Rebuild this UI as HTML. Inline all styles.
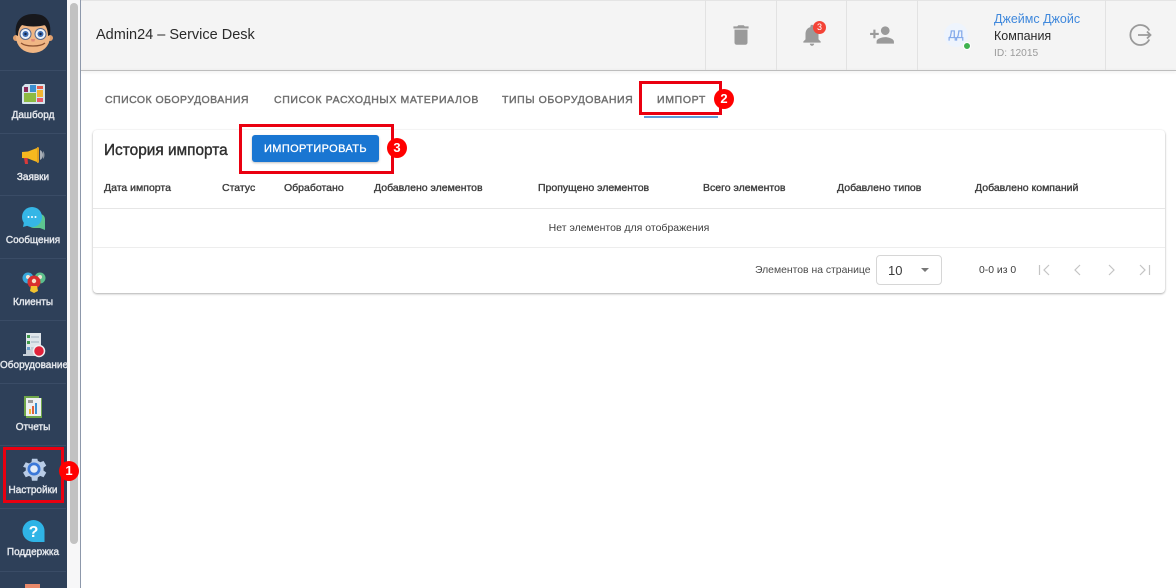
<!DOCTYPE html>
<html lang="ru"><head><meta charset="utf-8"><title>Admin24</title>
<style>
html,body{margin:0;padding:0;width:1176px;height:588px;overflow:hidden;background:#fff;font-family:"Liberation Sans",Arial,sans-serif}
.a{position:absolute;white-space:nowrap}
#side{position:absolute;left:0;top:0;width:67px;height:588px;background:#2e4059}
.div{position:absolute;left:0;width:66px;height:1px;background:#3a4c66}
.nl{position:absolute;left:0;width:66px;text-align:center;color:#e4e7ec;font-size:10px;-webkit-text-stroke:.4px #e4e7ec;white-space:nowrap;line-height:12px}
.tab{position:absolute;top:93px;font-size:10.5px;color:#6f6f6f;-webkit-text-stroke:.4px #6f6f6f;line-height:14px;white-space:nowrap}
.th{position:absolute;top:182px;font-size:10.5px;color:#3d3d3d;-webkit-text-stroke:.35px #3d3d3d;line-height:13px;white-space:nowrap}
.badge{position:absolute;width:20px;height:20px;border-radius:50%;background:#f00;color:#fff;font-size:13px;font-weight:bold;text-align:center;line-height:20px}
.red{position:absolute;border:3px solid #ea0010;box-sizing:border-box}
.vd{position:absolute;top:0;width:1px;height:70px;background:#e2e2e2}
svg{position:absolute;overflow:visible}
</style></head><body>
<div id="side"></div>
<div class="a" style="left:67px;top:0;width:13px;height:588px;background:#f7f7f8"></div>
<div class="a" style="left:70px;top:3px;width:8px;height:541px;background:#c2c2c2;border-radius:4px"></div>
<div class="a" style="left:80px;top:0;width:1px;height:588px;background:#8d98ab"></div>

<div class="div" style="top:70px"></div><div class="div" style="top:133px"></div><div class="div" style="top:195px"></div><div class="div" style="top:258px"></div><div class="div" style="top:320px"></div><div class="div" style="top:383px"></div><div class="div" style="top:445px"></div><div class="div" style="top:508px"></div><div class="div" style="top:571px"></div>

<!-- avatar -->
<svg style="left:13px;top:13px" width="40" height="40" viewBox="0 0 40 40">
<circle cx="3" cy="25" r="3" fill="#e0a06e"/><circle cx="37" cy="25" r="3" fill="#e0a06e"/>
<ellipse cx="20" cy="24" rx="17" ry="16" fill="#f0b684"/>
<path d="M3 22C1 9 8 1 20 1c6 0 10 1 13 4 4 4 5 10 4 17l-2 1c0-4-1-8-3-11-6 2-17 2-23 0-3 3-4 7-4 11z" fill="#17181c"/>
<circle cx="12.500" cy="21" r="5.500" fill="#eef3fa" stroke="#5a6a8a"/><circle cx="27.500" cy="21" r="5.500" fill="#eef3fa" stroke="#5a6a8a"/>
<circle cx="12.500" cy="21" r="3" fill="#3c6cb4"/><circle cx="27.500" cy="21" r="3" fill="#3c6cb4"/>
<circle cx="12.500" cy="21" r="1.200" fill="#14233f"/><circle cx="27.500" cy="21" r="1.200" fill="#14233f"/>
<path d="M8 30c5 4 19 4 24 0" fill="none" stroke="#8a5030" stroke-width="1.300"/><path d="M18 26h4l-.5 2.500h-3z" fill="#e08a78"/>
</svg>
<!-- dashboard -->
<svg style="left:22px;top:84px" width="23" height="20" viewBox="0 0 23 20">
<path d="M3 0h19a1 1 0 0 1 1 1v18a1 1 0 0 1-1 1H1a1 1 0 0 1-1-1V3z" fill="#d5e4ec"/>
<rect x="8" y="1" width="6" height="7" fill="#3b8fd0"/><rect x="15" y="2" width="6" height="3" fill="#e65a4a"/><rect x="15" y="6" width="6" height="7" fill="#f2b632"/>
<rect x="2" y="9" width="12" height="9" fill="#8dba42"/><rect x="15" y="14" width="6" height="4" fill="#e65a6a"/><rect x="2" y="3" width="4" height="5" fill="#8b2a5a"/>
</svg>
<div class="nl" style="top:110px">Дашборд</div>
<!-- megaphone -->
<svg style="left:22px;top:147px" width="23" height="18" viewBox="0 0 23 18">
<path d="M0 5l6-.500L15 1v14l-9-3.500L0 11z" fill="#f6b81f"/><path d="M2 11h3.500l.5 6H3z" fill="#d83a3a"/><path d="M15 0l2 .5v15l-2 .5z" fill="#e0a020"/>
<path d="M18 3c4 2 4 8 0 10z" fill="#a8aeb6"/><path d="M21 4c2 2 2 6 0 8z" fill="#8f98a2"/>
</svg>
<div class="nl" style="top:172px">Заявки</div>
<!-- messages -->
<svg style="left:22px;top:208px" width="23" height="22" viewBox="0 0 23 22">
<path d="M12 6h6a5 5 0 0 1 5 5v11l-5-2h-6a7 7 0 0 1 0-14z" fill="#5cc690"/>
<circle cx="10" cy="9" r="10" fill="#35b6e6"/><path d="M2 14l-1 5 7-2z" fill="#35b6e6"/>
<circle cx="6.500" cy="9" r="1" fill="#fff"/><circle cx="10" cy="9" r="1" fill="#fff"/><circle cx="13.500" cy="9" r="1" fill="#fff"/>
</svg>
<div class="nl" style="top:235px">Сообщения</div>
<!-- clients -->
<svg style="left:22px;top:272px" width="23" height="22" viewBox="0 0 23 22">
<circle cx="6" cy="6" r="5.500" fill="#38a8dc"/><circle cx="18" cy="6" r="5.500" fill="#5cbf8c"/><circle cx="6" cy="5" r="2" fill="#f3e3d3"/><circle cx="18" cy="5" r="2" fill="#f3e3d3"/>
<circle cx="12" cy="10" r="6.500" fill="#d82e2e"/><circle cx="12" cy="9" r="2.200" fill="#f6e0c8"/><path d="M9 14h6l1 5-4 2-4-2z" fill="#f3c22e"/>
</svg>
<div class="nl" style="top:297px">Клиенты</div>
<!-- equipment -->
<svg style="left:23px;top:333px" width="23" height="26" viewBox="0 0 23 26">
<path d="M3 0h15v16H3z" fill="#dfe5ea"/><path d="M3 16v5H0v2h14v-7z" fill="#c7d0d8"/>
<rect x="4" y="2" width="3" height="3" fill="#3f9a4a"/><rect x="4" y="8" width="3" height="3" fill="#3f9a4a"/><rect x="4" y="14" width="3" height="3" fill="#6a9fcc"/>
<path d="M8 4h8M8 9h8M8 15h3" stroke="#9fb0be"/>
<circle cx="16" cy="18" r="5.500" fill="#e0223a" stroke="#eef1f4" stroke-width="1.500"/>
</svg>
<div class="nl" style="top:360px;left:0;width:67px">Оборудование</div>
<!-- reports -->
<svg style="left:24px;top:396px" width="19" height="22" viewBox="0 0 19 22">
<path d="M0 0h15v2h3v20H2v-2H0z" fill="#6fa64a"/><rect x="2" y="2" width="15" height="18" fill="#eef0f2"/>
<rect x="4" y="4" width="5" height="3" fill="#9a9a9a"/><rect x="5" y="13" width="2" height="5" fill="#f2b632"/><rect x="8" y="10" width="2" height="8" fill="#e0603a"/><rect x="11" y="7" width="2" height="11" fill="#3b8fd0"/>
</svg>
<div class="nl" style="top:422px">Отчеты</div>
<!-- settings -->
<svg style="left:22px;top:457px" width="24" height="24" viewBox="0 0 24 24">
<path d="M19.400 13c.1-.3.100-.7.100-1s0-.7-.1-1l2.200-1.700-2.100-3.600-2.600 1c-.5-.4-1.100-.8-1.800-1L14.700 4h-4.200l-.4 2.700c-.6.200-1.200.6-1.800 1l-2.600-1-2.100 3.600L5.800 11c-.1.300-.1.700-.1 1s0 .7.100 1l-2.200 1.700 2.100 3.600 2.600-1c.5.400 1.100.8 1.800 1l.4 2.700h4.200l.4-2.700c.6-.2 1.200-.6 1.800-1l2.600 1 2.100-3.600z" transform="translate(-3.600 -3.400) scale(1.290)" fill="#b9cce6"/>
<circle cx="12" cy="12" r="6.500" fill="#3b78d8"/><circle cx="12" cy="12" r="3.800" fill="#e3ecf8"/>
</svg>
<div class="nl" style="top:485px">Настройки</div>
<!-- support -->
<svg style="left:22px;top:520px" width="23" height="23" viewBox="0 0 23 23">
<path d="M11.500 0a11 11 0 0 1 11 11v11h-11a11 11 0 0 1 0-22z" fill="#2fb4e6"/>
<text x="11.500" y="17" text-anchor="middle" font-family="Liberation Sans" font-weight="bold" font-size="16" fill="#fff">?</text>
</svg>
<div class="nl" style="top:547px">Поддержка</div>
<div class="a" style="left:25px;top:584px;width:15px;height:4px;background:#e8896a"></div>

<div class="red" style="left:3px;top:447px;width:61px;height:56px"></div>
<div class="badge" style="left:59px;top:461px">1</div>

<!-- header -->
<div class="a" style="left:81px;top:0;width:1095px;height:70px;background:#f4f4f4;border-top:1px solid #e4e4e4;box-sizing:border-box"></div>
<div class="a" style="left:81px;top:70px;width:1095px;height:1px;background:#bdbdbd;box-shadow:0 1px 3px rgba(0,0,0,.15)"></div>
<div class="a" style="left:96px;top:26px;font-size:14.500px;color:#2a2a2a;line-height:18px">Admin24 – Service Desk</div>
<div class="vd" style="left:705px"></div><div class="vd" style="left:776px"></div><div class="vd" style="left:846px"></div><div class="vd" style="left:917px"></div><div class="vd" style="left:1105px"></div>

<svg style="left:728px;top:22px" width="26" height="26" viewBox="0 0 24 24"><path d="M6 19c0 1.100.9 2 2 2h8c1.100 0 2-.9 2-2V7H6zM19 4h-3.500l-1-1h-5l-1 1H5v2h14z" fill="#9a9a9a"/></svg>
<svg style="left:799px;top:22px" width="26" height="26" viewBox="0 0 24 24"><path d="M12 22c1.100 0 2-.9 2-2h-4c0 1.100.9 2 2 2zm6-6v-5c0-3.100-1.600-5.600-4.500-6.300V4c0-.8-.7-1.500-1.500-1.500s-1.500.7-1.500 1.500v.7C7.600 5.400 6 7.900 6 11v5l-2 2v1h16v-1z" fill="#9a9a9a"/></svg>
<div class="a" style="left:813px;top:21px;width:13px;height:13px;border-radius:50%;background:#f44336;color:#fff;font-size:9px;text-align:center;line-height:13px">3</div>
<svg style="left:869px;top:22px" width="26" height="26" viewBox="0 0 24 24"><path d="M15 12c2.200 0 4-1.800 4-4s-1.800-4-4-4-4 1.800-4 4 1.800 4 4 4zm-9-2V7H4v3H1v2h3v3h2v-3h3v-2zm9 4c-2.700 0-8 1.300-8 4v2h16v-2c0-2.700-5.300-4-8-4z" fill="#9a9a9a"/></svg>

<div class="a" style="left:944px;top:23px;width:24px;height:24px;border-radius:50%;background:#eef4fd;color:#82a8ea;font-size:11px;text-align:center;line-height:25px;-webkit-text-stroke:.2px #82a8ea">ДД</div>
<div class="a" style="left:963px;top:42px;width:6px;height:6px;border-radius:50%;background:#3fb24f;border:1px solid #fff"></div>
<div class="a" style="left:994px;top:12px;font-size:12.500px;color:#3f88dc;line-height:15px">Джеймс Джойс</div>
<div class="a" style="left:994px;top:29px;font-size:12.500px;color:#2a2a2a;line-height:15px">Компания</div>
<div class="a" style="left:994px;top:47px;font-size:10.200px;color:#9a9a9a;line-height:13px">ID: 12015</div>
<svg style="left:1130px;top:24px" width="22" height="22" viewBox="0 0 22 22"><path d="M19.300 6.500A10 10 0 1 0 19.300 15.500" fill="none" stroke="#9a9a9a" stroke-width="1.800"/><path d="M8 11h12.500M17 7.500l3.500 3.500-3.500 3.500" fill="none" stroke="#9a9a9a" stroke-width="1.800"/></svg>

<!-- tabs -->
<div class="tab" style="left:105px;letter-spacing:.47px">СПИСОК ОБОРУДОВАНИЯ</div>
<div class="tab" style="left:274px;letter-spacing:.63px">СПИСОК РАСХОДНЫХ МАТЕРИАЛОВ</div>
<div class="tab" style="left:502px;letter-spacing:.58px">ТИПЫ ОБОРУДОВАНИЯ</div>
<div class="tab" style="left:657px;letter-spacing:.66px">ИМПОРТ</div>
<div class="a" style="left:644px;top:116px;width:74px;height:2px;background:#5b9bd8"></div>
<div class="red" style="left:639px;top:81px;width:83px;height:34px"></div>
<div class="badge" style="left:714px;top:89px">2</div>

<!-- card -->
<div class="a" style="left:93px;top:130px;width:1072px;height:163px;background:#fff;border-radius:4px;box-shadow:0 1px 2px rgba(0,0,0,.3),0 0 2px rgba(0,0,0,.06)"></div>
<div class="a" style="left:104px;top:142px;font-size:15.400px;color:#2f2f2f;-webkit-text-stroke:.4px #2f2f2f;line-height:18px">История импорта</div>
<div class="a" style="left:252px;top:135px;width:127px;height:27px;border-radius:3px;background:#1976d2;color:#fff;font-size:11px;-webkit-text-stroke:.3px #fff;letter-spacing:.38px;text-align:center;line-height:28px;box-shadow:0 1px 2px rgba(0,0,0,.25)">ИМПОРТИРОВАТЬ</div>
<div class="red" style="left:239px;top:124px;width:155px;height:50px"></div>
<div class="badge" style="left:387px;top:138px">3</div>

<div class="th" style="left:104px">Дата импорта</div>
<div class="th" style="left:222px">Статус</div>
<div class="th" style="left:284px">Обработано</div>
<div class="th" style="left:374px">Добавлено элементов</div>
<div class="th" style="left:538px">Пропущено элементов</div>
<div class="th" style="left:703px">Всего элементов</div>
<div class="th" style="left:837px">Добавлено типов</div>
<div class="th" style="left:975px">Добавлено компаний</div>
<div class="a" style="left:93px;top:208px;width:1072px;height:1px;background:#e6e6e6"></div>
<div class="a" style="left:93px;top:222px;width:1072px;text-align:center;font-size:10.500px;color:#3d3d3d;line-height:13px">Нет элементов для отображения</div>
<div class="a" style="left:93px;top:247px;width:1072px;height:1px;background:#ededed"></div>

<div class="a" style="left:755px;top:264px;font-size:10.400px;color:#4a4a4a;line-height:13px">Элементов на странице</div>
<div class="a" style="left:876px;top:255px;width:66px;height:30px;box-sizing:border-box;border:1px solid #d6d6d6;border-radius:4px"></div>
<div class="a" style="left:888px;top:263px;font-size:13px;color:#3a3a3a;line-height:16px">10</div>
<div class="a" style="left:921px;top:268px;width:0;height:0;border-left:4px solid transparent;border-right:4px solid transparent;border-top:4px solid #777"></div>
<div class="a" style="left:979px;top:264px;font-size:10.400px;color:#3d3d3d;line-height:13px">0-0 из 0</div>
<svg style="left:1036px;top:262px" width="120" height="16" viewBox="0 0 120 16" fill="none" stroke="#c4c4c4" stroke-width="1.200">
<path d="M3.500 3v10M13 3L8 8l5 5"/><path d="M44 3l-5 5 5 5"/><path d="M73 3l5 5-5 5"/><path d="M104 3l5 5-5 5M113.500 3v10"/>
</svg>
</body></html>
